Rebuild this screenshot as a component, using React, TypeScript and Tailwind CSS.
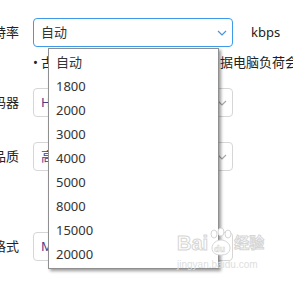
import React from "react";

const OPTIONS = ["自动", "1800", "2000", "3000", "4000", "5000", "8000", "15000", "20000"];

function Chevron({ color }: { color: string }) {
  return (
    <svg width="10" height="6" viewBox="0 0 10 6" fill="none" className="shrink-0">
      <path d="M1 1l4 4 4-4" stroke={color} strokeWidth="1.2" />
    </svg>
  );
}

function Label({ children }: { children: React.ReactNode }) {
  return (
    <div className="w-[19px] shrink-0 flex justify-end whitespace-nowrap text-[13px] text-[#222]">
      {children}
    </div>
  );
}

function Select({ value, focused }: { value: string; focused?: boolean }) {
  return (
    <div
      className={
        focused
          ? "ml-[14px] w-[200px] h-[29px] shrink-0 flex items-center justify-between pl-[7px] pr-[5px] rounded-[4px] border border-[#3d9be9] bg-white"
          : "ml-[14px] w-[200px] h-[29px] shrink-0 flex items-center justify-between pl-[7px] pr-[5px] rounded-[4px] border border-[#d6d6d6] bg-white"
      }
    >
      <span className={focused ? "text-[13px] text-[#333]" : "text-[13px] text-[#4a3a8a]"}>{value}</span>
      <Chevron color={focused ? "#4a93d6" : "#a8a8a8"} />
    </div>
  );
}

export default function App() {
  return (
    <div className="relative w-[293px] h-[282px] overflow-hidden bg-white text-[#333] font-['Noto_Sans','Noto_Sans_CJK_SC',sans-serif]">
      <div className="flex flex-col pt-[18px]">
        {/* 比特率 */}
        <div className="flex items-center h-[29px]">
          <Label>比特率</Label>
          <Select value="自动" focused />
          <span className="ml-[18px] shrink-0 text-[13px] text-[#222]">kbps</span>
        </div>

        {/* 说明 */}
        <div className="flex items-center h-[20px] mt-[6px] whitespace-nowrap text-[13px] text-[#222]">
          <span className="ml-[33px] w-[8px] shrink-0">•</span>
          <span className="inline-block shrink-0 w-[179px] overflow-hidden">古典模式下将由系统自动根</span>
          <span className="shrink-0">据电脑负荷会自动调整</span>
        </div>

        {/* 编码器 */}
        <div className="flex items-center h-[29px] mt-[15px]">
          <Label>编码器</Label>
          <Select value="H.264" />
        </div>

        {/* 品质 */}
        <div className="flex items-center h-[29px] mt-[25px]">
          <Label>画面品质</Label>
          <Select value="高" />
        </div>

        {/* 格式 */}
        <div className="flex items-center h-[29px] mt-[61px]">
          <Label>录制格式</Label>
          <Select value="MP4" />
        </div>
      </div>

      {/* 下拉列表 */}
      <div className="absolute left-[48px] top-[48px] w-[171px] h-[221px] bg-white border border-[#8f8f8f] shadow-[2px_2px_3px_rgba(0,0,0,0.4)] pt-[2px] flex flex-col">
        {OPTIONS.map((o) => (
          <div key={o} className="h-[24px] shrink-0 flex items-center pl-[7px] text-[13px] text-[#333]">
            {o}
          </div>
        ))}
      </div>

      {/* 水印 */}
      <div className="absolute left-[177px] top-[228px] flex flex-col pointer-events-none">
        <div className="flex items-center h-[29px]">
          <span className="text-[20px] font-bold leading-none text-white [-webkit-text-stroke:1px_#d6d6d6] font-['Liberation_Sans',sans-serif]">
            Bai
          </span>
          <svg width="24" height="29" viewBox="0 0 24 29" fill="none" className="mx-[1px] shrink-0">
            <ellipse cx="5" cy="6" rx="3" ry="4" stroke="#d6d6d6" fill="#fff" />
            <ellipse cx="12" cy="4" rx="3" ry="4" stroke="#d6d6d6" fill="#fff" />
            <ellipse cx="19" cy="6" rx="3" ry="4" stroke="#d6d6d6" fill="#fff" />
            <path d="M3 20c0-5 5-8 9-8s9 3 9 8-4 7-9 7-9-2-9-7z" stroke="#d6d6d6" fill="#fff" />
            <text x="5" y="24" fontSize="9" fontWeight="bold" fill="#fff" stroke="#d6d6d6" strokeWidth="0.6" fontFamily="Liberation Sans">du</text>
          </svg>
          <span className="text-[15px] font-bold leading-none text-white [-webkit-text-stroke:1px_#d6d6d6]">
            经验
          </span>
        </div>
        <span className="text-[10px] leading-none mt-[3px] text-[#dedede] font-['Liberation_Sans',sans-serif]">
          jingyan.baidu.com
        </span>
      </div>
    </div>
  );
}
